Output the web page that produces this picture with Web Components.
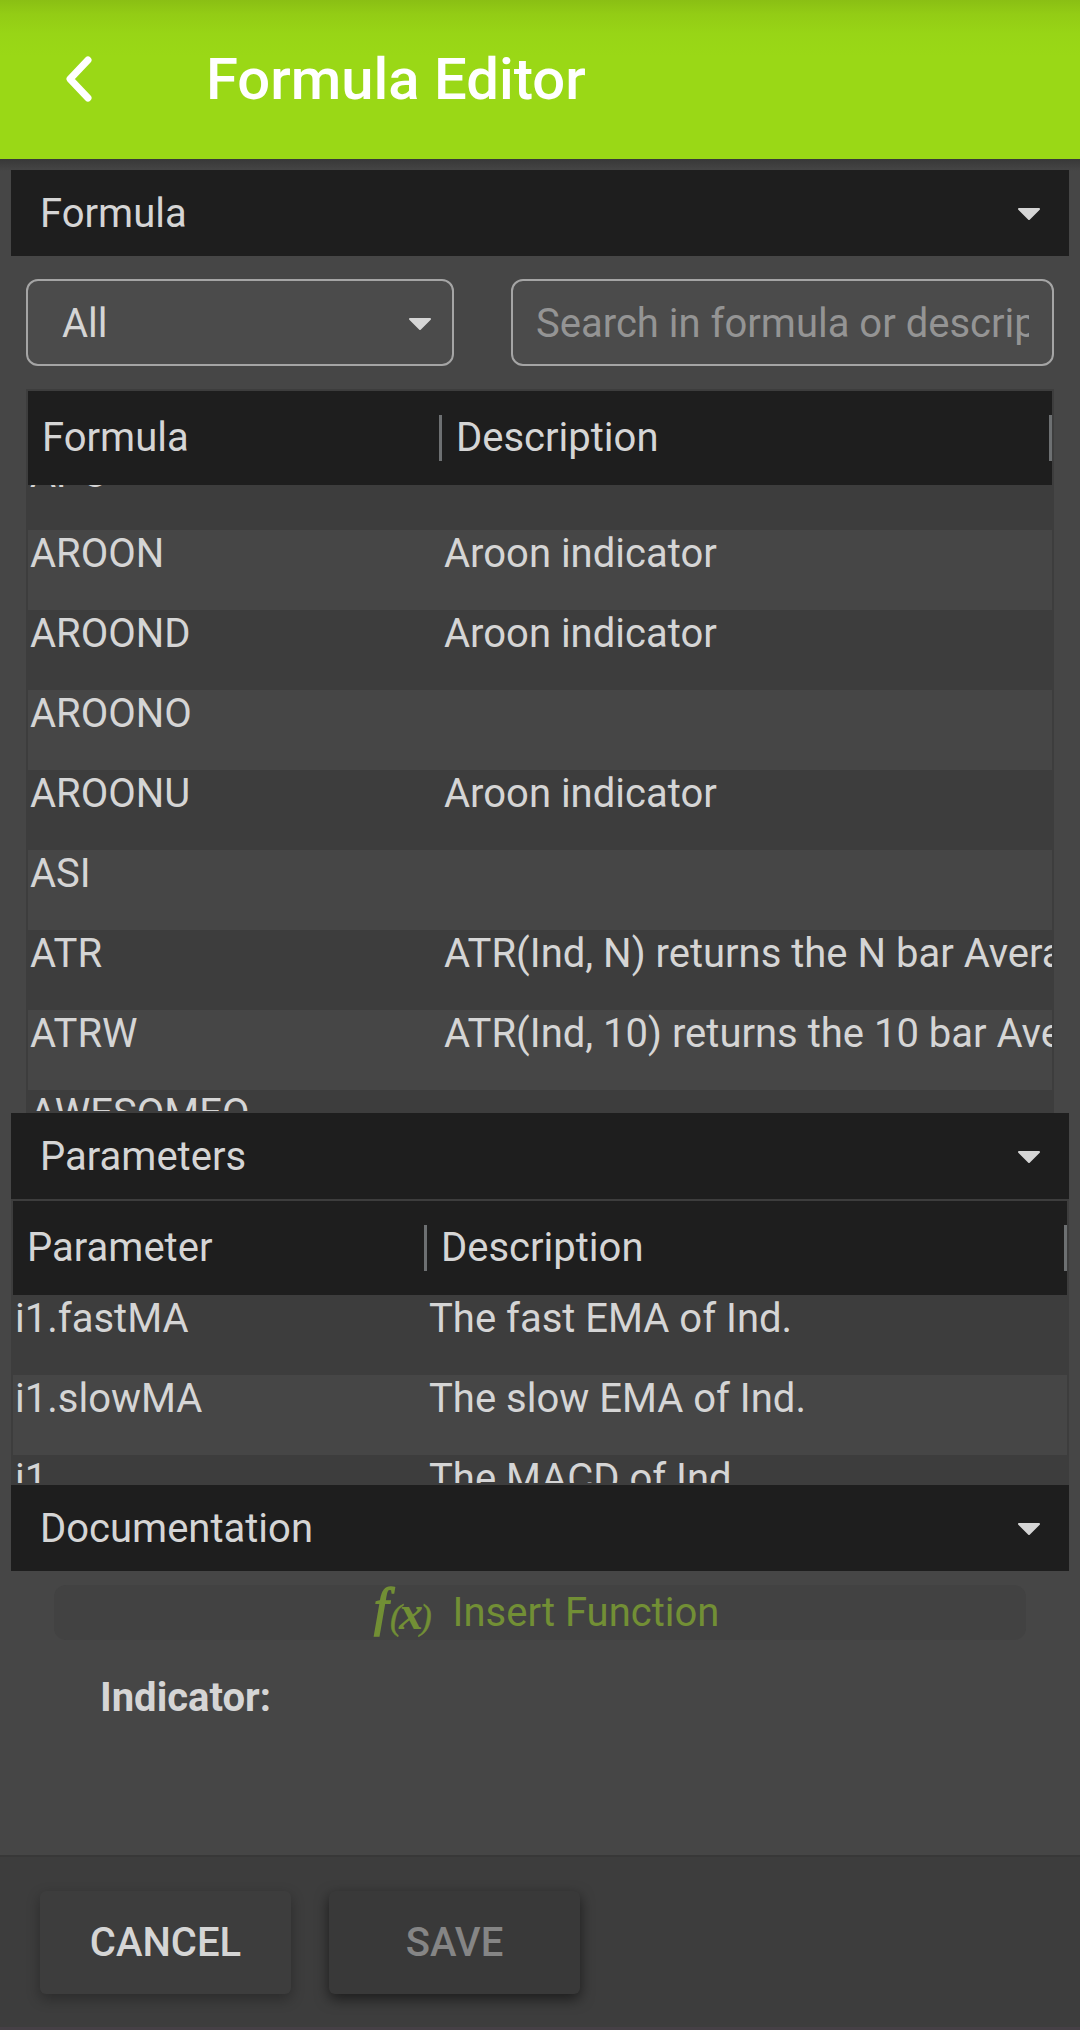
<!DOCTYPE html>
<html lang="en">
<head>
<meta charset="utf-8">
<meta name="viewport" content="width=device-width, initial-scale=1">
<title>Formula Editor</title>
<style>
  :root {
    --page: #464646;
    --panel: #3d3d3d;
    --bar: #1e1e1e;
    --text: #d5d5d5;
    --field: #4b4b4b;
    --outline: #a5a5a5;
    --accent: #9ad816;
  }
  html, body { height: 100%; }
  body {
    margin: 0;
    background: var(--page);
    color: var(--text);
    font: 400 40px/47px Roboto, sans-serif;
  }
</style>
</head>
<body>
<formula-editor></formula-editor>

<script>
const define = (name, html, setup) => {
  const template = document.createElement('template');
  template.innerHTML = '<style>*,:host{box-sizing:border-box}button,input,select{font:inherit;color:inherit;margin:0}</style>' + html;
  customElements.define(name, class extends HTMLElement {
    constructor() {
      super();
      this.attachShadow({ mode: 'open' }).append(template.content.cloneNode(true));
    }
    connectedCallback() {
      if (setup && !this.ready) { this.ready = true; setup(this, this.shadowRoot); }
    }
  });
};

define('caret-icon', `
  <style>:host{display:block;width:24px;height:16px} svg{display:block}</style>
  <svg width="24" height="16" viewBox="0 0 24 16" aria-hidden="true">
    <path d="M2 4H22L12 14Z" fill="currentColor" stroke="currentColor" stroke-width="2" stroke-linejoin="round"/>
  </svg>`);

define('app-header', `
  <style>
    :host{display:block}
    header{display:flex;align-items:center;height:159px;padding:0 40px 2px;gap:88px;color:#fff;
      background:linear-gradient(#8abf14,#93cc15 14px,#98d516 34px,var(--accent) 56px)}
    button{display:grid;place-items:center;width:78px;height:78px;padding:0;border:0;background:none}
    h1{margin:0;font-size:58px;line-height:66px;font-weight:500}
  </style>
  <header>
    <button type="button" aria-label="Back">
      <svg width="32" height="48" viewBox="0 0 32 48" fill="none" stroke="currentColor" stroke-width="7" stroke-linecap="round" stroke-linejoin="round" aria-hidden="true">
        <path d="M25 5L7 24L25 43"/>
      </svg>
    </button>
    <h1><slot></slot></h1>
  </header>`);

define('section-bar', `
  <style>
    :host{display:block;flex:none}
    h2{margin:0;font:inherit}
    button{display:flex;align-items:center;justify-content:space-between;width:100%;height:86px;
      padding:0 28px 0 29px;border:0;background:var(--bar);text-align:left}
  </style>
  <h2><button type="button" aria-expanded="true"><slot></slot><caret-icon></caret-icon></button></h2>`);

define('filter-row', `
  <style>
    :host{display:grid;grid-template-columns:428fr 543fr;gap:57px}
    .pick{display:grid;align-items:center}
    select,caret-icon{grid-area:1/1}
    select,input{width:100%;height:87px;border:2px solid var(--outline);border-radius:12px;
      background:var(--field);appearance:none;outline:0;min-width:0}
    select{padding:2px 60px 0 34px}
    input{padding:2px 23px 0}
    input::placeholder{color:#949494;opacity:1}
    caret-icon{justify-self:end;margin-right:22px;pointer-events:none}
  </style>
  <div class="pick">
    <select aria-label="Formula group"><option>All</option></select>
    <caret-icon></caret-icon>
  </div>
  <input type="text" aria-label="Search" placeholder="Search in formula or description">`);

define('data-grid', `
  <style>
    :host{display:flex;border:2px solid var(--panel);background:var(--panel)}
    table{display:flex;flex-direction:column;flex:1;min-width:0;min-height:0}
    thead,tbody{display:block}
    tbody{flex:1;min-height:0;overflow:hidden}
    tr{display:grid;grid-template-columns:414px minmax(0,1fr)}
    thead tr{height:94px;align-items:center;background:var(--bar)}
    th{height:46px;padding:0 0 0 14px;line-height:46px;font-weight:400;text-align:left;border-right:3px solid #6d7072}
    tbody tr{height:80px}
    tbody tr:nth-child(even){background:var(--page)}
    td{padding:0 0 0 2px;white-space:nowrap;overflow:hidden}
  </style>
  <table>
    <thead><tr></tr></thead>
    <tbody></tbody>
  </table>`);

/* Fills a data-grid and leaves its body scrolled by the given distance. */
const fillGrid = (grid, head, rows, scroll = 0) => {
  const root = grid.shadowRoot;
  const cell = (tag, text) => {
    const el = document.createElement(tag);
    el.textContent = text;
    if (tag === 'th') el.scope = 'col';
    return el;
  };
  root.querySelector('thead tr').append(...head.map(t => cell('th', t)));
  const body = root.querySelector('tbody');
  body.append(...rows.map(cells => {
    const tr = document.createElement('tr');
    tr.append(...cells.map(t => cell('td', t)));
    return tr;
  }));
  body.scrollTop = scroll;
};

define('insert-button', `
  <style>
    :host{display:block}
    button{display:flex;align-items:center;justify-content:center;gap:20px;width:100%;height:55px;padding:0;
      border:0;border-radius:12px;background:#424242;color:#728f35}
    svg{display:block;overflow:visible;font-family:"Liberation Serif",serif;font-style:italic}
  </style>
  <button type="button" disabled>
    <svg width="72" height="48" viewBox="0 0 72 48" fill="currentColor" aria-hidden="true">
      <text x="13" y="36" font-size="52" stroke="currentColor" stroke-width="1.6">f</text>
      <text x="29" y="40" font-size="35" stroke="currentColor" stroke-width=".5">(</text>
      <text x="38" y="40" font-size="48" font-weight="700">x</text>
      <text x="59" y="40" font-size="35" stroke="currentColor" stroke-width=".5">)</text>
    </svg>
    <slot></slot>
  </button>`);

define('action-button', `
  <style>
    :host{display:block}
    button{width:251px;height:103px;padding:0;border:0;border-radius:6px;background:var(--panel);font-weight:500;
      box-shadow:0 5px 14px rgba(0,0,0,.3)}
    button:disabled{background:#393939;color:#858585;box-shadow:0 5px 14px rgba(0,0,0,.55)}
  </style>
  <button type="button"><slot></slot></button>`, (host, root) => {
  root.querySelector('button').disabled = host.hasAttribute('disabled');
});

define('formula-editor', `
  <style>
    :host{display:flex;flex-direction:column;height:100%}
    main{flex:1;min-height:0;display:flex;flex-direction:column;padding:11px 11px 0;
      background:linear-gradient(#383838,var(--page) 12px)}
    filter-row{margin:23px 15px}
    .formulas{flex:724 1 724px;min-height:0;margin:0 15px}
    .params{flex:286 1 286px;min-height:0}
    .doc{flex:none;height:284px;padding:14px 43px 0}
    .doc p{margin:34px 46px 0;font-weight:700}
    footer{display:flex;gap:38px;padding:34px 40px 33px;border-top:2px solid #383838;background:var(--panel)}
    .edge{height:3px;background:#464046}
  </style>
  <app-header>Formula Editor</app-header>
  <main>
    <section-bar>Formula</section-bar>
    <filter-row></filter-row>
    <data-grid class="formulas"></data-grid>
    <section-bar>Parameters</section-bar>
    <data-grid class="params"></data-grid>
    <section-bar>Documentation</section-bar>
    <div class="doc">
      <insert-button>Insert Function</insert-button>
      <p>Indicator:</p>
    </div>
  </main>
  <footer>
    <action-button>CANCEL</action-button>
    <action-button disabled>SAVE</action-button>
  </footer>
  <div class="edge"></div>`, (host, root) => {
  fillGrid(root.querySelector('.formulas'), ['Formula', 'Description'], [
    ['APO', ''],
    ['AROON', 'Aroon indicator'],
    ['AROOND', 'Aroon indicator'],
    ['AROONO', ''],
    ['AROONU', 'Aroon indicator'],
    ['ASI', ''],
    ['ATR', 'ATR(Ind, N) returns the N bar Average True Range'],
    ['ATRW', 'ATR(Ind, 10) returns the 10 bar Average True Range'],
    ['AWESOMEO', '']
  ], 35);
  fillGrid(root.querySelector('.params'), ['Parameter', 'Description'], [
    ['i1.fastMA', 'The fast EMA of Ind.'],
    ['i1.slowMA', 'The slow EMA of Ind.'],
    ['i1', 'The MACD of Ind.']
  ]);
});
</script>
</body>
</html>
